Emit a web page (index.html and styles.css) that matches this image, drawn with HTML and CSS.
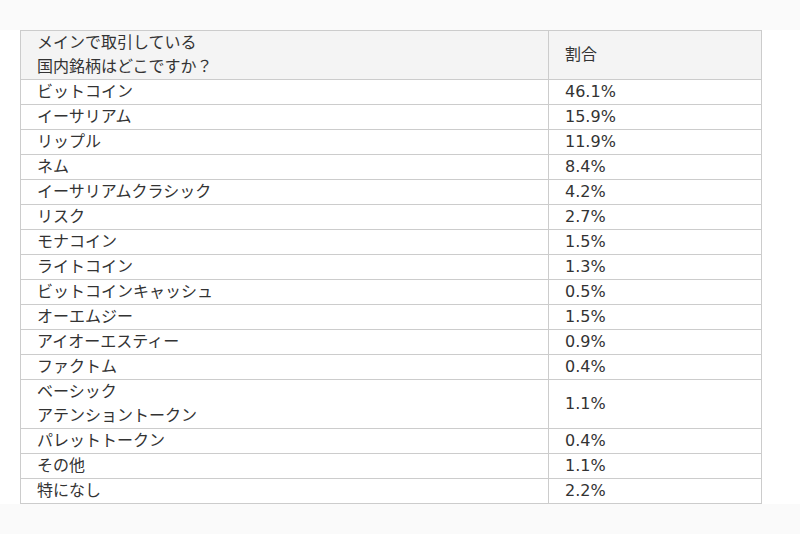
FILE: index.html
```html
<!DOCTYPE html>
<html lang="ja">
<head>
<meta charset="utf-8">
<link rel="stylesheet" href="styles.css">
</head>
<body>
<div class="top"></div>
<main class="content">
<table class="share">
<thead>
<tr><th class="name">メインで取引している<br>国内銘柄はどこですか？</th><th class="pct">割合</th></tr>
</thead>
<tbody>
<tr><td>ビットコイン</td><td>46.1%</td></tr>
<tr><td>イーサリアム</td><td>15.9%</td></tr>
<tr><td>リップル</td><td>11.9%</td></tr>
<tr><td>ネム</td><td>8.4%</td></tr>
<tr><td>イーサリアムクラシック</td><td>4.2%</td></tr>
<tr><td>リスク</td><td>2.7%</td></tr>
<tr><td>モナコイン</td><td>1.5%</td></tr>
<tr><td>ライトコイン</td><td>1.3%</td></tr>
<tr><td>ビットコインキャッシュ</td><td>0.5%</td></tr>
<tr><td>オーエムジー</td><td>1.5%</td></tr>
<tr><td>アイオーエスティー</td><td>0.9%</td></tr>
<tr><td>ファクトム</td><td>0.4%</td></tr>
<tr><td>ベーシック<br>アテンショントークン</td><td>1.1%</td></tr>
<tr><td>パレットトークン</td><td>0.4%</td></tr>
<tr><td>その他</td><td>1.1%</td></tr>
<tr><td>特になし</td><td>2.2%</td></tr>
</tbody>
</table>
</main>
<div class="bottom"></div>
</body>
</html>
```
FILE: styles.css
```css
html, body {
  margin: 0;
  padding: 0;
  background: #fafafa;
}
body {
  font-family: "DejaVu Sans", "Noto Sans CJK JP", sans-serif;
  font-size: 16px;
  color: #333;
}
.top {
  height: 30px;
}
.content {
  background: #fff;
  padding: 0 20px;
}
.share {
  border-collapse: collapse;
  width: 742px;
  table-layout: fixed;
}
.share th, .share td {
  border: 1px solid #ccc;
  padding: 0 16px;
  line-height: 24px;
  text-align: left;
  font-weight: normal;
  vertical-align: middle;
}
.share th {
  background: #f4f4f4;
}
.share .name {
  width: 495px;
}
.share .pct {
  width: auto;
}
.bottom {
  height: 40px;
}
```
